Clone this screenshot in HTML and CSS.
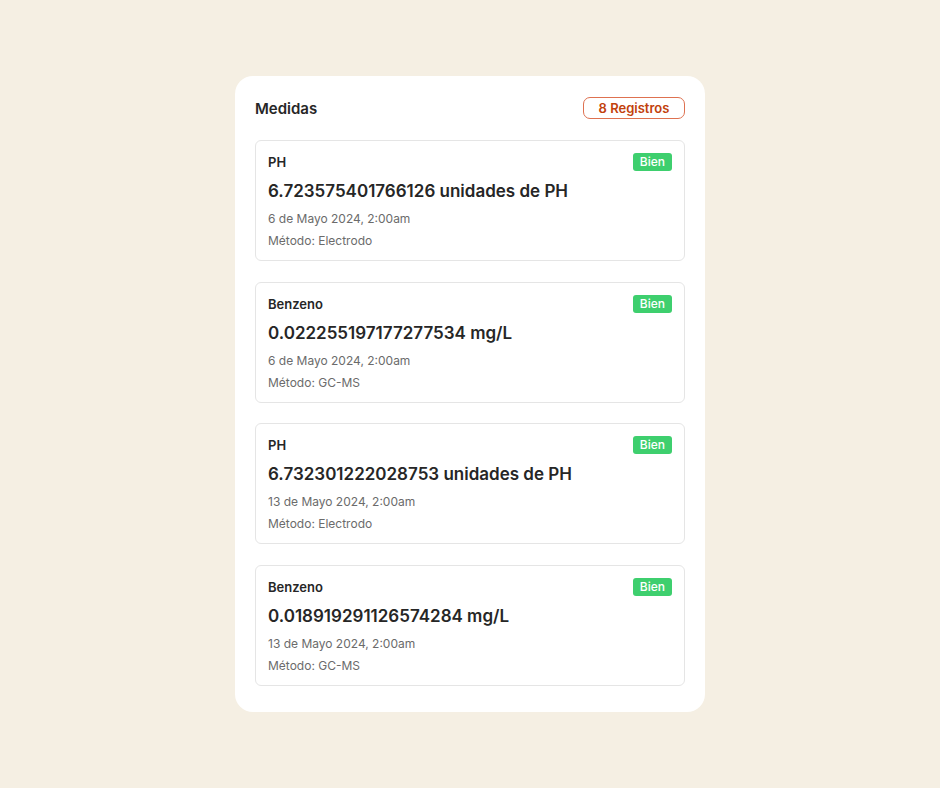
FILE: index.html
```html
<!DOCTYPE html>
<html lang="es">
<head>
  <meta charset="UTF-8">
  <meta name="viewport" content="width=device-width, initial-scale=1.0">
  <title>Medidas</title>
  <link rel="stylesheet" href="styles.css">
</head>
<body>

  <div class="panel">
    <div class="panel-header">
      <h2>Medidas</h2>
      <span class="contador">8 Registros</span>
    </div>

    <div class="lista">
      <div class="medida">
        <div class="medida-top">
          <span class="parametro">PH</span>
          <span class="estado">Bien</span>
        </div>
        <div class="valor">6.723575401766126 unidades de PH</div>
        <div class="meta">6 de Mayo 2024, 2:00am</div>
        <div class="meta">Método: Electrodo</div>
      </div>

      <div class="medida">
        <div class="medida-top">
          <span class="parametro">Benzeno</span>
          <span class="estado">Bien</span>
        </div>
        <div class="valor">0.022255197177277534 mg/L</div>
        <div class="meta">6 de Mayo 2024, 2:00am</div>
        <div class="meta">Método: GC-MS</div>
      </div>

      <div class="medida">
        <div class="medida-top">
          <span class="parametro">PH</span>
          <span class="estado">Bien</span>
        </div>
        <div class="valor">6.732301222028753 unidades de PH</div>
        <div class="meta">13 de Mayo 2024, 2:00am</div>
        <div class="meta">Método: Electrodo</div>
      </div>

      <div class="medida">
        <div class="medida-top">
          <span class="parametro">Benzeno</span>
          <span class="estado">Bien</span>
        </div>
        <div class="valor">0.018919291126574284 mg/L</div>
        <div class="meta">13 de Mayo 2024, 2:00am</div>
        <div class="meta">Método: GC-MS</div>
      </div>
    </div>
  </div>

</body>
</html>
```

FILE: styles.css
```css
* {
  box-sizing: border-box;
}

body {
  font-family: Inter, 'Noto Sans', sans-serif;
  background: #f5efe3;
  margin: 0;
  padding: 76px 0 0;
  color: #262626;
}

.panel {
  width: 470px;
  margin: 0 auto;
  background: #fff;
  border-radius: 18px;
  padding: 21px 20px 26px;
}

.panel-header {
  display: flex;
  align-items: center;
  justify-content: space-between;
  height: 22px;
  margin-bottom: 21px;
}

h2 {
  margin: 0;
  font-size: 15px;
  font-weight: 600;
  color: #262626;
}

.contador {
  width: 102px;
  height: 22px;
  border: 1px solid #de7150;
  border-radius: 7px;
  color: #c2410c;
  font-size: 13px;
  font-weight: 600;
  display: flex;
  align-items: center;
  justify-content: center;
}

.lista {
  display: flex;
  flex-direction: column;
  gap: 20.5px;
}

.medida {
  border: 1px solid #e5e5e5;
  border-radius: 6px;
  padding: 12px 12px 8px;
  height: 121px;
}

.medida-top {
  display: flex;
  align-items: center;
  justify-content: space-between;
  height: 18px;
}

.parametro {
  font-size: 13px;
  font-weight: 600;
  color: #262626;
}

.estado {
  background: #3ecf6e;
  color: #fff;
  font-size: 12px;
  font-weight: 500;
  height: 18px;
  line-height: 18px;
  padding: 0 7px;
  border-radius: 3px;
}

.valor {
  margin-top: 9px;
  font-size: 17px;
  font-weight: 600;
  line-height: 22px;
  color: #262626;
}

.valor + .meta {
  margin-top: 6px;
}

.meta {
  font-size: 12px;
  line-height: 22px;
  color: #6b6b6b;
}
```
